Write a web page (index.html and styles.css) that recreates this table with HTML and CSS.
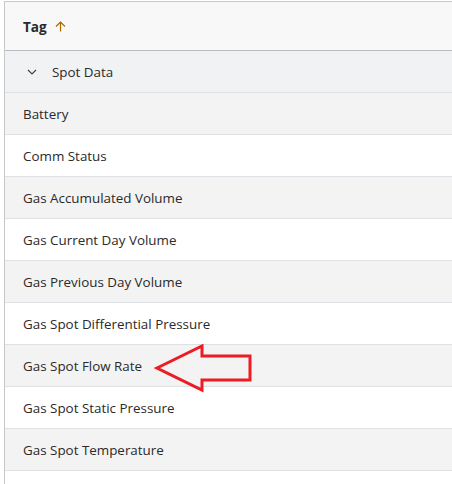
FILE: index.html
```html
<!DOCTYPE html>
<html lang="en">
<head>
<meta charset="UTF-8">
<title>Tags</title>
<link rel="stylesheet" href="styles.css">
</head>
<body>

<div class="grid">
    <div class="header-row">
        <span class="header-title">Tag</span>
        <svg class="sort-icon" width="11" height="11" viewBox="0 0 11 11">
            <path d="M5.5 10.5V1M1 5.5L5.5 1L10 5.5" fill="none" stroke="#a86a00" stroke-width="1.2"/>
        </svg>
    </div>
    <div class="group-row">
        <svg class="chevron" width="10" height="6" viewBox="0 0 10 6">
            <path d="M1 1L5 5L9 1" fill="none" stroke="#444" stroke-width="1.2"/>
        </svg>
        <span>Spot Data</span>
    </div>
    <div class="row odd">Battery</div>
    <div class="row">Comm Status</div>
    <div class="row odd">Gas Accumulated Volume</div>
    <div class="row">Gas Current Day Volume</div>
    <div class="row odd">Gas Previous Day Volume</div>
    <div class="row">Gas Spot Differential Pressure</div>
    <div class="row odd">Gas Spot Flow Rate</div>
    <div class="row">Gas Spot Static Pressure</div>
    <div class="row odd">Gas Spot Temperature</div>
    <div class="row"></div>

    <svg class="callout" width="100" height="50" viewBox="0 0 100 50">
        <polygon points="3,24 48,2 48,12 96,12 96,36 48,36 48,46" fill="none" stroke="#ed1c24" stroke-width="3" stroke-linejoin="miter"/>
    </svg>
</div>

</body>
</html>
```

FILE: styles.css
```css
body {
    margin: 0;
    padding: 1px 0 0 4px;
    font-family: "Open Sans", "Noto Sans", sans-serif;
    font-size: 13.4px;
    color: #2a2a2a;
    background: #fff;
    overflow: hidden;
}
.grid {
    position: relative;
    border-top: 1px solid #c8c8c8;
    border-left: 1px solid #c8c8c8;
    width: 460px;
}
.header-row {
    display: flex;
    align-items: center;
    gap: 8px;
    height: 48px;
    padding-left: 18px;
    background: #f8f8f8;
    border-bottom: 1px solid #b8bdc4;
}
.header-title {
    font-weight: 700;
    font-size: 13.6px;
}
.sort-icon {
    margin-top: 1px;
}
.group-row {
    display: flex;
    align-items: center;
    gap: 15px;
    height: 41px;
    padding-left: 22px;
    background: #f1f2f4;
    border-bottom: 1px solid #dde1e6;
}
.row {
    display: flex;
    align-items: center;
    height: 41px;
    padding-left: 18px;
    background: #fff;
    border-bottom: 1px solid #dde1e6;
}
.row.odd {
    background: #f3f3f3;
}
.callout {
    position: absolute;
    left: 149px;
    top: 342px;
}
```
